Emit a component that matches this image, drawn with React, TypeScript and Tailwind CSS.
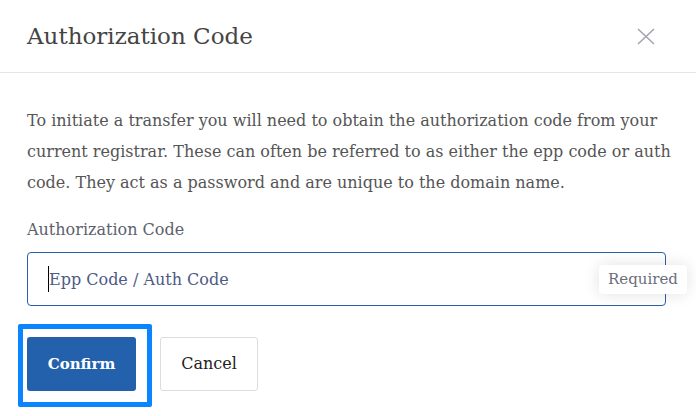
import React from "react";

const serif = "font-['Roboto_Slab','DejaVu_Serif',serif]";

const CloseIcon = () => (
  <svg width="18" height="17" viewBox="0 0 18 17" fill="none" stroke="#a3a5b3" strokeWidth="1.6">
    <path d="M1 1 L17 16 M17 1 L1 16" />
  </svg>
);

const App = () => {
  return (
    <div className={`w-[696px] h-[416px] bg-white overflow-hidden ${serif}`}>
      <div className="flex items-center justify-between h-[73px] border-b border-[#e6e6e6] pl-[27px] pr-[41px]">
        <h2 className="text-[23px] font-light text-[#444]">Authorization Code</h2>
        <button className="pt-[1px]">
          <CloseIcon />
        </button>
      </div>
      <div className="px-[27px] pt-[32px]">
        <p className="text-[16px] leading-[31px] text-[#555] whitespace-nowrap">
          To initiate a transfer you will need to obtain the authorization code from your
          <br />
          current registrar. These can often be referred to as either the epp code or auth
          <br />
          code. They act as a password and are unique to the domain name.
        </p>
        <label className="block mt-[20px] text-[16px] leading-[24px] text-[#5d616d]">
          Authorization Code
        </label>
        <div className="relative mt-[10px]">
          <input
            className="w-[639px] h-[54px] rounded-[4px] border border-[#2b5fa9] pl-[21px] text-[16px] text-[#333] placeholder:text-[#4e5a85] outline-none"
            placeholder="Epp Code / Auth Code"
          />
          <span className="absolute left-[21px] top-[14px] w-px h-[26px] bg-black" />
          <div className="absolute left-[572px] top-[13px] h-[29px] px-[9px] rounded-[4px] bg-white shadow-[0_0_16px_rgba(0,0,0,0.12)] flex items-center text-[15px] text-[#6b6e7a]">
            Required
          </div>
        </div>
        <div className="flex gap-[24px] mt-[31px]">
          <div className="relative">
            <button className="h-[54px] w-[109px] rounded-[3px] bg-[#2461ad] text-white font-bold text-[15px]">
              Confirm
            </button>
            <div className="absolute left-[-9px] top-[-13px] w-[134px] h-[83px] border-[5px] border-[#0a84ff] rounded-[2px] pointer-events-none" />
          </div>
          <button className="h-[54px] w-[98px] rounded-[3px] border border-[#dcdcdc] bg-white text-[#222] text-[16px]">
            Cancel
          </button>
        </div>
      </div>
    </div>
  );
};

export default App;
